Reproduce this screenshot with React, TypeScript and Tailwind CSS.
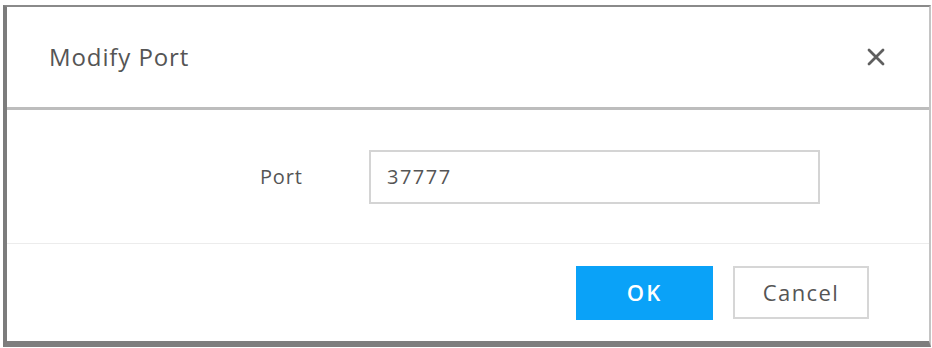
import React from "react";

export default function App() {
  return (
    <div className="w-[932px] h-[348px] bg-white pt-[5px] pl-[3px] pr-[1px] pb-[1px]" style={{ fontFamily: "'Open Sans', Lato, sans-serif" }}>
      <div className="flex flex-col h-[342px] bg-white border-l-[4px] border-l-[#7c7c7c] border-t-2 border-t-[#8a8a8a] border-r-2 border-r-[#c4c4c4] border-b-[6px] border-b-[#7e7e7e]">
        <div className="flex items-center justify-between h-[103px] pl-[42px] pr-[43px] border-b-[3px] border-b-[#bdbdbd]">
          <span className="text-[24px] tracking-[0.9px] text-[#555555]">Modify Port</span>
          <svg width="20" height="20" viewBox="0 0 20 20" className="text-[#5f5f5f]">
            <path d="M3 3 L17 17 M17 3 L3 17" stroke="currentColor" strokeWidth="2.8" strokeLinecap="round" />
          </svg>
        </div>
        <div className="flex items-center h-[134px] border-b border-b-[#ececec] pl-[253px]">
          <span className="text-[20px] tracking-[0.8px] text-[#555555] w-[109px]">Port</span>
          <div className="flex items-center w-[451px] h-[54px] border-2 border-[#d4d4d4] pl-[16px] text-[20px] tracking-[1.5px] text-[#555555]">
            37777
          </div>
        </div>
        <div className="flex-1 flex items-center justify-end gap-[20px] pr-[60px]">
          <button className="w-[137px] h-[54px] bg-[#0aa2f8] text-white text-[22px] font-semibold tracking-[2px]">OK</button>
          <button className="w-[136px] h-[53px] bg-white border-2 border-[#d6d6d6] text-[#555555] text-[22px] tracking-[1.4px]">Cancel</button>
        </div>
      </div>
    </div>
  );
}
